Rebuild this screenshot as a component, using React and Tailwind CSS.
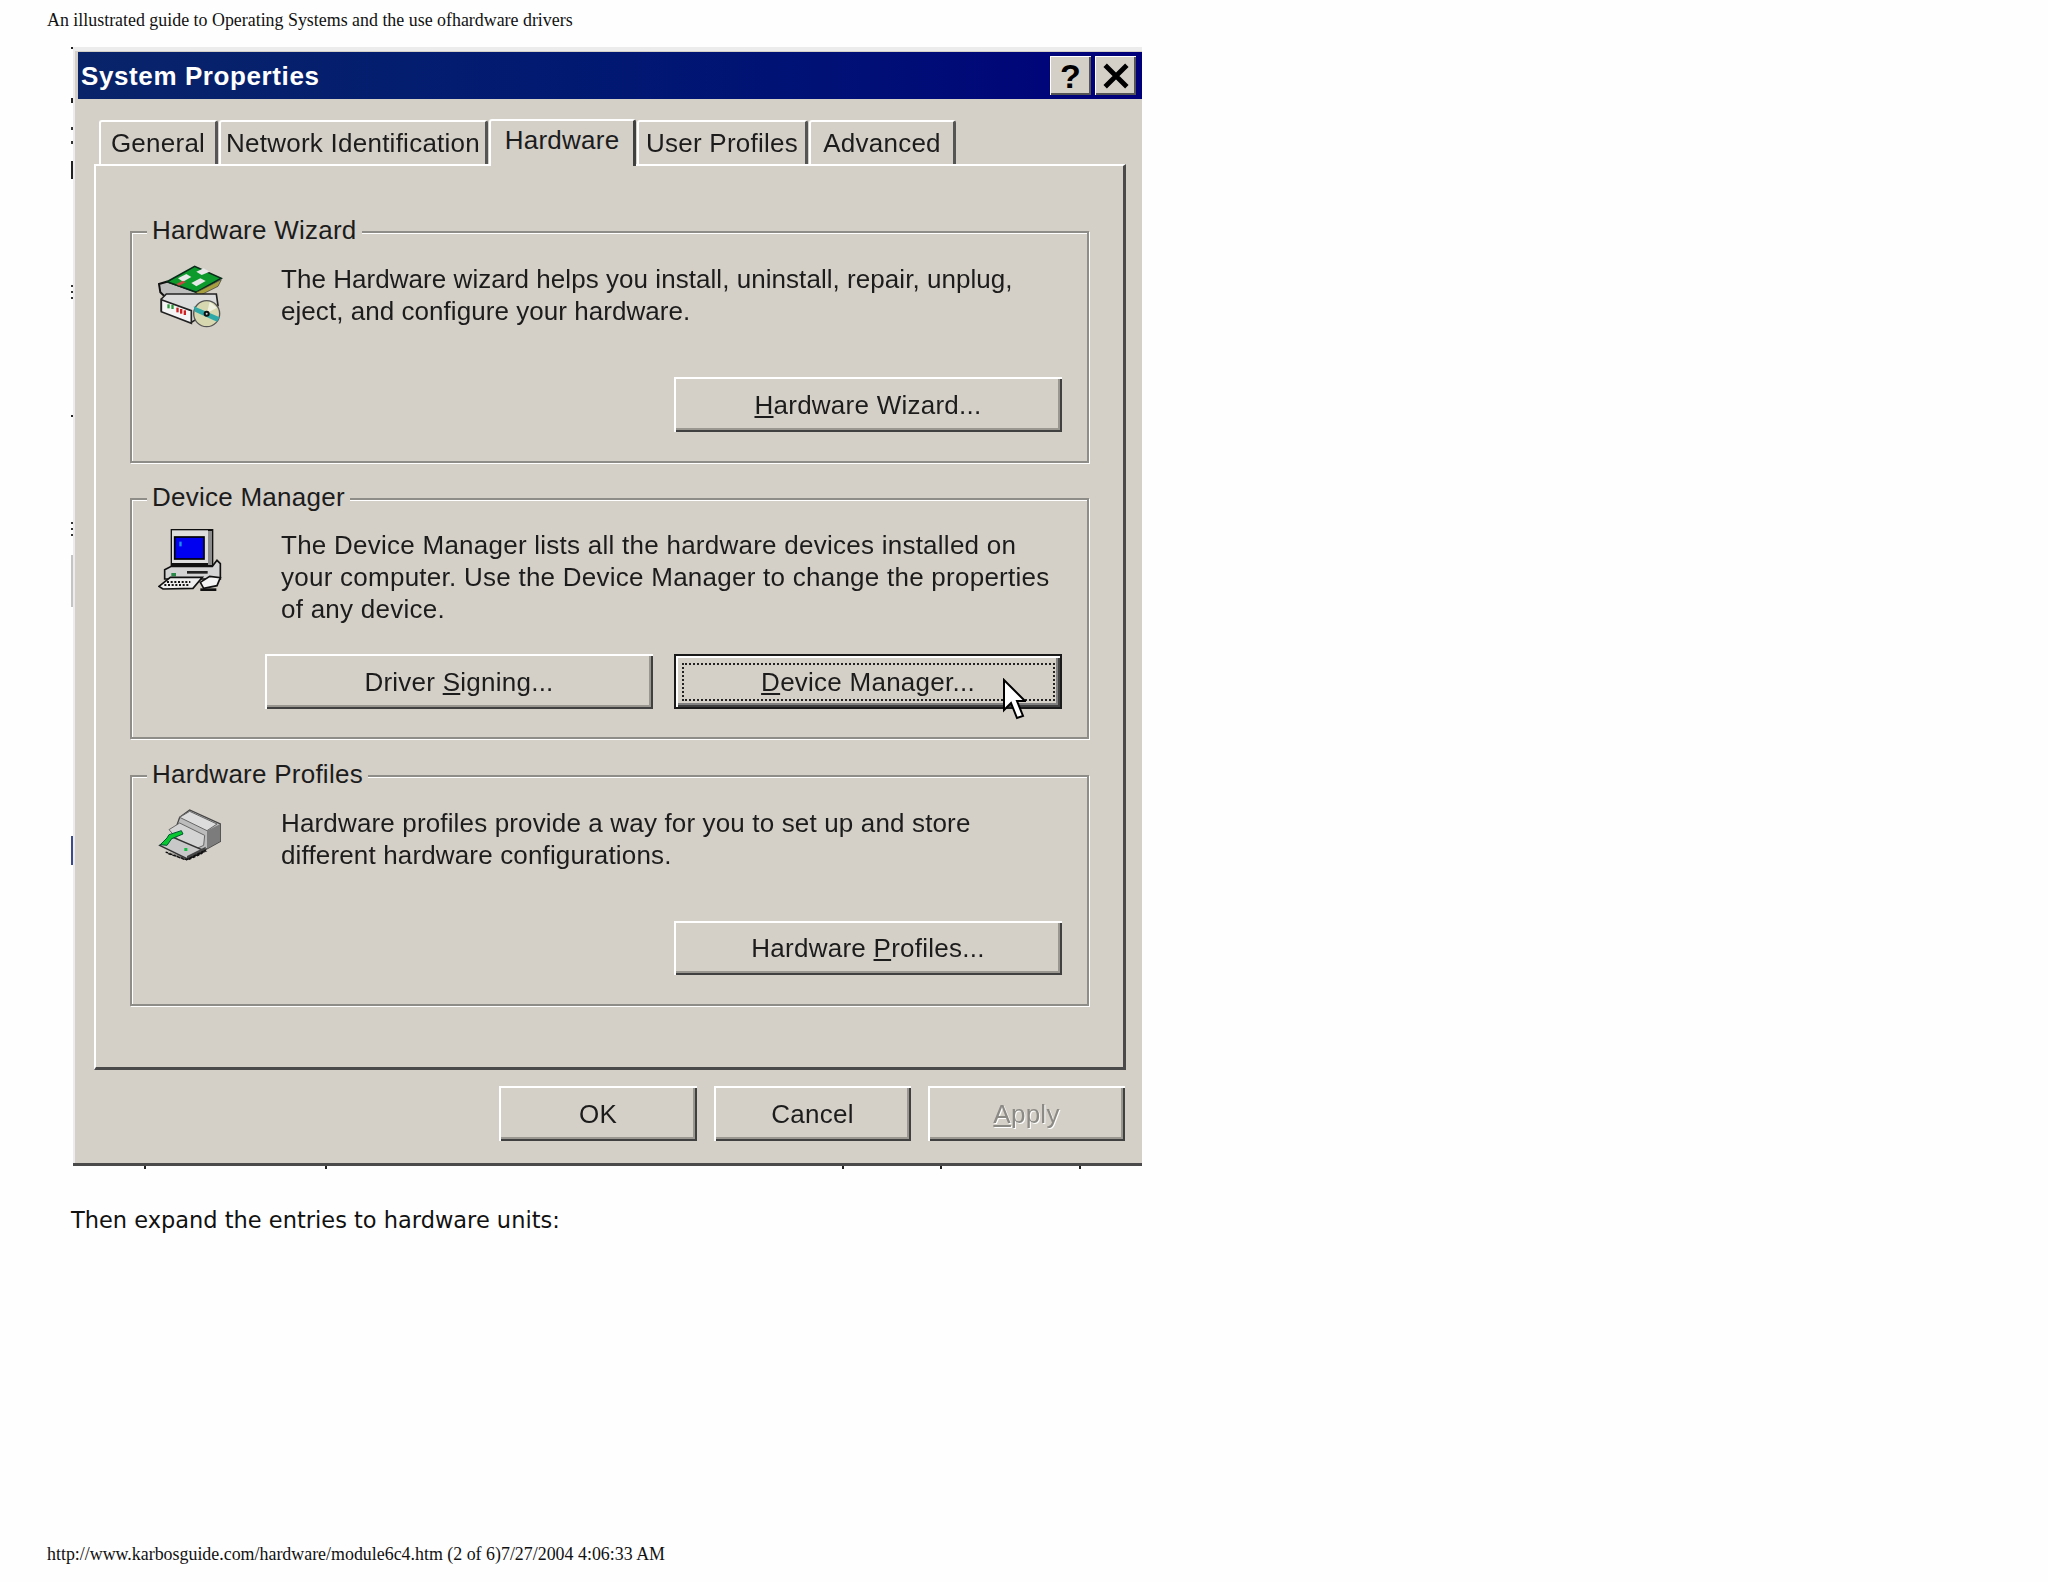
const winFont = { fontFamily: '"Liberation Sans", Arial, sans-serif' };

const leftTicks = [
  { top: 0, h: 2, c: "#222" },
  { top: 51, h: 5, c: "#222" },
  { top: 80, h: 3, c: "#333" },
  { top: 94, h: 3, c: "#333" },
  { top: 114, h: 18, c: "#222" },
  { top: 238, h: 2, c: "#333" },
  { top: 244, h: 2, c: "#333" },
  { top: 250, h: 2, c: "#333" },
  { top: 368, h: 2, c: "#222" },
  { top: 475, h: 2, c: "#333" },
  { top: 481, h: 2, c: "#333" },
  { top: 487, h: 2, c: "#333" },
  { top: 508, h: 52, c: "#c4c4c4" },
  { top: 789, h: 29, c: "#3b4a8c" },
];
const bottomTicks = [69, 250, 767, 865, 1004];

function WizardIcon() {
  return (
    <svg viewBox="85 65 195 195" className="w-[65px] h-[65px] shrink-0">
      <polygon points="88,125 112,118 205,150 205,190 150,205 92,150" fill="#bdbdbd" stroke="#111" strokeWidth="6" />
      <polygon points="112,118 195,72 275,108 200,150" fill="#0c9a2c" stroke="#0a2a1a" strokeWidth="5" />
      <polygon points="145,108 170,95 185,104 160,118" fill="#e8e8e8" />
      <polygon points="185,122 212,108 228,116 200,132" fill="#e8e8e8" />
      <polygon points="200,88 222,78 240,88 216,98" fill="#e8e8e8" />
      <polygon points="140,125 160,115 168,120 148,130" fill="#c44" />
      <polygon points="200,150 275,112 265,132 205,162" fill="#a8a040" stroke="#333" strokeWidth="2" />
      <polygon points="95,170 110,155 260,155 265,190 185,240 95,205" fill="#dcdcdc" stroke="#222" strokeWidth="5" />
      <polygon points="95,172 185,205 185,243 95,208" fill="#f4f4f4" stroke="#222" strokeWidth="5" />
      <rect x="113" y="186" width="7" height="12" fill="#2a9a3a" />
      <rect x="125" y="188" width="7" height="12" fill="#2a9a3a" />
      <rect x="140" y="196" width="7" height="14" fill="#d02020" />
      <rect x="151" y="200" width="7" height="14" fill="#d02020" />
      <rect x="162" y="204" width="7" height="14" fill="#d02020" />
      <circle cx="231" cy="214" r="39" fill="#d8d8b0" stroke="#555" strokeWidth="4" />
      <polygon points="192,192 270,225 262,238 196,208" fill="#2fa8a8" />
      <polygon points="240,178 262,196 232,212" fill="#f0f0e0" />
      <circle cx="231" cy="214" r="9" fill="#111" />
      <circle cx="231" cy="214" r="3" fill="#ddd" />
    </svg>
  );
}

function ComputerIcon() {
  return (
    <svg viewBox="85 80 195 195" className="w-[65px] h-[65px] shrink-0 -mt-[4px]">
      <rect x="123" y="86" width="128" height="112" fill="#111" />
      <rect x="127" y="90" width="108" height="98" fill="#dedede" />
      <rect x="235" y="92" width="12" height="102" fill="#8c8c8c" />
      <rect x="135" y="110" width="88" height="66" fill="#0000f0" stroke="#000" strokeWidth="5" />
      <rect x="149" y="124" width="7" height="14" fill="#1890f0" />
      <polygon points="105,208 125,198 248,198 262,180 272,190 272,236 105,236" fill="#d4d4d4" stroke="#111" strokeWidth="5" />
      <rect x="125" y="218" width="14" height="10" fill="#2a8a4a" />
      <rect x="172" y="212" width="62" height="8" fill="#222" />
      <polygon points="88,258 122,231 218,231 190,264 100,266" fill="#eee" stroke="#111" strokeWidth="5" />
      <path d="M112 245h70M104 254h74" stroke="#111" strokeWidth="6" strokeDasharray="6 5" />
      <polygon points="212,246 240,228 272,232 262,256 222,264" fill="#f4f4f4" stroke="#111" strokeWidth="5" />
      <rect x="212" y="264" width="48" height="8" fill="#111" />
    </svg>
  );
}

function ProfilesIcon() {
  return (
    <svg viewBox="85 60 195 195" className="w-[65px] h-[65px] shrink-0">
      <polygon points="150,88 180,66 272,108 272,160 178,212 118,178" fill="#bcbcbc" stroke="#444" strokeWidth="4" />
      <polygon points="150,88 180,70 262,108 232,128" fill="#dcdcdc" stroke="#666" strokeWidth="3" />
      <polygon points="232,128 272,108 272,160 232,182" fill="#7c7c7c" />
      <polygon points="118,125 150,105 225,142 222,172 178,192" fill="#d4d4d4" stroke="#666" strokeWidth="3" />
      <polygon points="90,172 130,148 228,190 172,212" fill="#c8c8c8" stroke="#333" strokeWidth="4" />
      <polygon points="108,188 172,215 172,204 228,176 228,190 172,212" fill="#444" />
      <polygon points="92,170 112,150 118,140 155,128 160,138 126,152 112,172" fill="#08c830" stroke="#053" strokeWidth="3" />
      <polygon points="108,192 168,216 172,214 228,186 214,198 174,216 118,198" fill="#111" stroke="#111" strokeWidth="4" strokeDasharray="8 5" />
      <rect x="164" y="180" width="9" height="9" fill="#10c040" />
    </svg>
  );
}

function Cursor() {
  return (
    <svg viewBox="0 0 24 44" className="absolute left-[326px] top-[22px] w-[24px] h-[44px]">
      <polygon points="2,2 2,32 9,25 15,40 21,38 15,23 23,23" fill="#fff" stroke="#000" strokeWidth="2" />
    </svg>
  );
}

function WinButton({ children, className = "", focused = false, disabled = false }) {
  if (focused) {
    return (
      <div className={`relative flex items-center justify-center border-2 border-[#1a1a1a] bg-[#d4d0c8] shadow-[inset_2px_2px_0_#fff,inset_-2px_-2px_0_#404040,inset_-4px_-4px_0_#808080] ${className}`}>
        <div className="absolute left-[6px] right-[5px] top-[7px] bottom-[6px] border-2 border-dotted border-[#222]" />
        <span className="relative">{children}</span>
        <Cursor />
      </div>
    );
  }
  return (
    <div className={`flex items-center justify-center bg-[#d4d0c8] shadow-[inset_2px_2px_0_#fff,inset_-2px_-2px_0_#404040,inset_-4px_-4px_0_#9a9790] ${disabled ? "text-[#8c8a85]" : ""} ${className}`}>
      {children}
    </div>
  );
}

function GroupBox({ title, className, children }) {
  return (
    <div className={`relative border-2 border-[#8f8d88] shadow-[1px_1px_0_#fff,inset_1px_1px_0_#fff] flex flex-col justify-between pl-[26px] pr-[24px] pt-[31px] ${className}`}>
      <span className="absolute left-[15px] -top-[19px] bg-[#d4d0c8] px-[5px] leading-[32px] whitespace-nowrap">{title}</span>
      {children}
    </div>
  );
}

function Tab({ label, width, active = false }) {
  if (active) {
    return (
      <div className={`relative z-10 h-[47px] -mb-[2px] flex items-start justify-center pt-[3px] bg-[#d4d0c8] rounded-t-[3px] border-l-2 border-t-2 border-white border-r-[3px] border-r-[#404040] ${width}`}>
        {label}
      </div>
    );
  }
  return (
    <div className={`h-[44px] flex items-center justify-center bg-[#d4d0c8] rounded-t-[3px] border-l-2 border-t-2 border-white border-r-[3px] border-r-[#555] ${width}`}>
      {label}
    </div>
  );
}

export default function App() {
  return (
    <div className="h-[1582px] bg-[#fefefe] flex flex-col overflow-hidden">
      <p className="pl-[47px] pt-[9px] h-[47px] text-[17.9px] leading-[22px] text-[#111]" style={{ fontFamily: '"Liberation Serif", serif' }}>
        An illustrated guide to Operating Systems and the use ofhardware drivers
      </p>

      <div className="relative ml-[73px] w-[1069px] h-[1116px] bg-[#d4d0c8] pl-[3px] pt-[1px] border-l-2 border-t-[4px] border-[#ececec] text-[26px] leading-[32px] tracking-[0.25px] text-[#1c1c1c] shadow-[0_3px_0_#4a4a4a] blur-[0.4px]" style={winFont}>
        {leftTicks.map((t) => (
          <div key={t.top} className="absolute -left-[4px] w-[2px]" style={{ top: t.top - 4, height: t.h, background: t.c }} />
        ))}
        {bottomTicks.map((x) => (
          <div key={x} className="absolute -bottom-[6px] w-[2px] h-[3px] bg-[#222]" style={{ left: x }} />
        ))}

        <div className="h-[47px] flex items-center justify-between pl-[3px] pr-[6px] bg-gradient-to-r from-[#0a246a] to-[#00007a]">
          <span className="text-white text-[26px] font-bold tracking-[0.6px]" style={winFont}>System Properties</span>
          <div className="flex gap-[4px] items-center">
            <div className="w-[41px] h-[39px] flex items-center justify-center bg-[#d4d0c8] shadow-[inset_1px_1px_0_#fff,inset_-2px_-2px_0_#555] text-[34px] font-bold text-black">?</div>
            <div className="w-[41px] h-[39px] flex items-center justify-center bg-[#d4d0c8] shadow-[inset_1px_1px_0_#fff,inset_-2px_-2px_0_#555]">
              <svg viewBox="0 0 24 24" className="w-[26px] h-[26px]">
                <path d="M2 2 22 22M22 2 2 22" stroke="#000" strokeWidth="4.5" />
              </svg>
            </div>
          </div>
        </div>

        <div className="pl-[16px] pr-[16px] pt-[20px]">
          <div className="flex items-end pl-[5px] gap-[1px]">
            <Tab label="General" width="w-[119px]" />
            <Tab label="Network Identification" width="w-[269px]" />
            <Tab label="Hardware" width="w-[147px]" active />
            <Tab label="User Profiles" width="w-[171px]" />
            <Tab label="Advanced" width="w-[147px]" />
          </div>

          <div className="h-[906px] border-l-2 border-t-2 border-white border-r-[3px] border-b-[3px] border-r-[#4a4a4a] border-b-[#4a4a4a] pl-[34px] pr-[34px] pt-[65px] flex flex-col gap-[35px]">
            <GroupBox title="Hardware Wizard" className="h-[232px] pb-[29px]">
              <div className="flex gap-[58px]">
                <WizardIcon />
                <p className="-mt-[1px] whitespace-nowrap tracking-[0.05px]">The Hardware wizard helps you install, uninstall, repair, unplug,<br />eject, and configure your hardware.</p>
              </div>
              <div className="flex justify-end pr-[1px]">
                <WinButton className="w-[388px] h-[55px]"><span><u className="underline-offset-2">H</u>ardware Wizard...</span></WinButton>
              </div>
            </GroupBox>

            <GroupBox title="Device Manager" className="h-[241px] pb-[28px]">
              <div className="flex gap-[58px]">
                <ComputerIcon />
                <p className="-mt-[2px] whitespace-nowrap">The Device Manager lists all the hardware devices installed on<br />your computer. Use the Device Manager to change the properties<br />of any device.</p>
              </div>
              <div className="flex justify-end gap-[21px] pr-[1px]">
                <WinButton className="w-[388px] h-[55px]"><span>Driver <u className="underline-offset-2">S</u>igning...</span></WinButton>
                <WinButton className="w-[388px] h-[55px]" focused><span><u className="underline-offset-2">D</u>evice Manager...</span></WinButton>
              </div>
            </GroupBox>

            <GroupBox title="Hardware Profiles" className="mt-[1px] h-[231px] pb-[29px]">
              <div className="flex gap-[58px]">
                <ProfilesIcon />
                <p className="-mt-[1px] whitespace-nowrap tracking-[0.15px]">Hardware profiles provide a way for you to set up and store<br />different hardware configurations.</p>
              </div>
              <div className="flex justify-end pr-[1px]">
                <WinButton className="w-[388px] h-[54px]"><span>Hardware <u className="underline-offset-2">P</u>rofiles...</span></WinButton>
              </div>
            </GroupBox>
          </div>

          <div className="flex justify-end gap-[17px] mt-[16px] pr-[1px]">
            <WinButton className="w-[198px] h-[55px]">OK</WinButton>
            <WinButton className="w-[197px] h-[55px]">Cancel</WinButton>
            <WinButton className="w-[197px] h-[55px]" disabled><span className="[text-shadow:1px_1px_0_#fff]"><u className="underline-offset-2">A</u>pply</span></WinButton>
          </div>
        </div>
      </div>

      <p className="pl-[71px] mt-[43px] text-[22.5px] leading-[28px] text-[#111]" style={{ fontFamily: '"DejaVu Sans", sans-serif' }}>
        Then expand the entries to hardware units:
      </p>

      <p className="mt-auto pl-[47px] pb-[17px] text-[17.9px] leading-[22px] text-[#111]" style={{ fontFamily: '"Liberation Serif", serif' }}>
        http://www.karbosguide.com/hardware/module6c4.htm (2 of 6)7/27/2004 4:06:33 AM
      </p>
    </div>
  );
}
